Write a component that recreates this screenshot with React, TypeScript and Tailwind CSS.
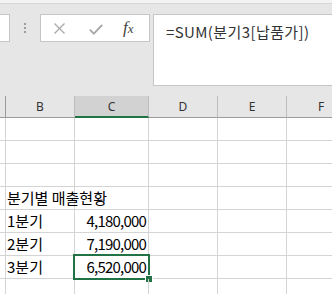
const KR = "font-['Noto_Sans_CJK_KR','Noto_Sans',sans-serif]";

type Row = { b?: string; c?: string; selected?: boolean };

const rows: Row[] = [
  {},
  {},
  {},
  { b: "분기별 매출현황" },
  { b: "1분기", c: "4,180,000" },
  { b: "2분기", c: "7,190,000" },
  { b: "3분기", c: "6,520,000", selected: true },
  {},
];

function HeaderCell({ label, w, active }: { label: string; w: string; active?: boolean }) {
  return (
    <div
      className={`${w} h-[22px] flex items-center justify-center border-r border-[#bdbdbd] text-[12px] text-[#333] font-['Noto_Sans',sans-serif] ${
        active ? "bg-[#d2d2d2] border-b-2 border-b-[#217346]" : "border-b border-b-[#9b9b9b]"
      }`}
    >
      <span className={active ? "mt-px" : ""}>{label}</span>
    </div>
  );
}

export default function App() {
  return (
    <div className="w-[332px] h-[294px] overflow-hidden bg-white">
      <div className="bg-[#e6e6e6]">
        <div className="h-[3px] bg-[#f3f3f3]" />
        <div className="h-px bg-[#d6d6d6]" />
        <div className="flex items-start pt-[10px]">
          <div className="w-[10px] h-[28px] bg-white border border-l-0 border-[#c6c6c6]" />
          <div className="ml-[14px] mt-[9px] flex flex-col gap-[2px]">
            <div className="w-[2px] h-[2px] bg-[#9b9b9b]" />
            <div className="w-[2px] h-[2px] bg-[#9b9b9b]" />
            <div className="w-[2px] h-[2px] bg-[#9b9b9b]" />
          </div>
          <div className="ml-[14px] w-[110px] h-[28px] bg-white border border-[#c6c6c6] relative">
            <svg className="absolute left-[13px] top-[8px]" width="11" height="11" viewBox="0 0 11 11">
              <path d="M0.5 0.5 L10.5 10.5 M10.5 0.5 L0.5 10.5" stroke="#a9a9a9" strokeWidth="1.3" fill="none" />
            </svg>
            <svg className="absolute left-[48px] top-[9px]" width="14" height="11" viewBox="0 0 14 11">
              <path d="M0.8 5.6 L4.8 9.6 L13.2 1" stroke="#a9a9a9" strokeWidth="1.8" fill="none" />
            </svg>
            <span className="absolute left-[82px] top-[3px] text-[17px] italic text-[#444] font-['Liberation_Serif',serif] leading-[20px]">
              f<span className="text-[13px]">x</span>
            </span>
          </div>
          <div className="ml-[3px] flex-1 h-[72px] bg-white border border-r-0 border-[#c6c6c6] pl-[12px] pt-[5px]">
            <span className={`${KR} text-[15px] text-[#333] leading-[20px] tracking-[0.4px]`}>=SUM(분기3[납품가])</span>
          </div>
        </div>
        <div className="flex mt-[10px]">
          <div className="w-[6px] h-[22px] border-r border-[#9b9b9b] border-b border-b-[#9b9b9b]" />
          <HeaderCell label="B" w="w-[69px]" />
          <HeaderCell label="C" w="w-[74px]" active />
          <HeaderCell label="D" w="w-[69px]" />
          <HeaderCell label="E" w="w-[69px]" />
          <div className="flex-1 h-[22px] border-b border-[#9b9b9b] flex items-center pl-[31px] text-[12px] text-[#333] font-['Noto_Sans',sans-serif]">
            F
          </div>
        </div>
      </div>
      <div className={`${KR} text-[15px] text-black`}>
        {rows.map((r, i) => (
          <div key={i} className="flex h-[23px]">
            <div className="w-[6px] border-r border-b border-[#d4d4d4]" />
            <div className="w-[69px] border-r border-b border-[#d4d4d4] pl-px flex items-center whitespace-nowrap overflow-visible">
              <span className="leading-[20px] relative z-10">{r.b}</span>
            </div>
            <div className="w-[74px] border-r border-b border-[#d4d4d4] pr-[2px] flex items-center justify-end relative">
              <span className="leading-[20px] tracking-[-0.8px]">{r.c}</span>
              {r.selected && (
                <>
                  <div className="absolute -left-[2px] -top-[2px] w-[77px] h-[26px] border-2 border-[#217346]" />
                  <div className="absolute left-[70px] top-[19px] w-[8px] h-[8px] bg-[#217346] border border-white" />
                </>
              )}
            </div>
            <div className="w-[69px] border-r border-b border-[#d4d4d4]" />
            <div className="w-[69px] border-r border-b border-[#d4d4d4]" />
            <div className="flex-1 border-b border-[#d4d4d4]" />
          </div>
        ))}
      </div>
    </div>
  );
}
